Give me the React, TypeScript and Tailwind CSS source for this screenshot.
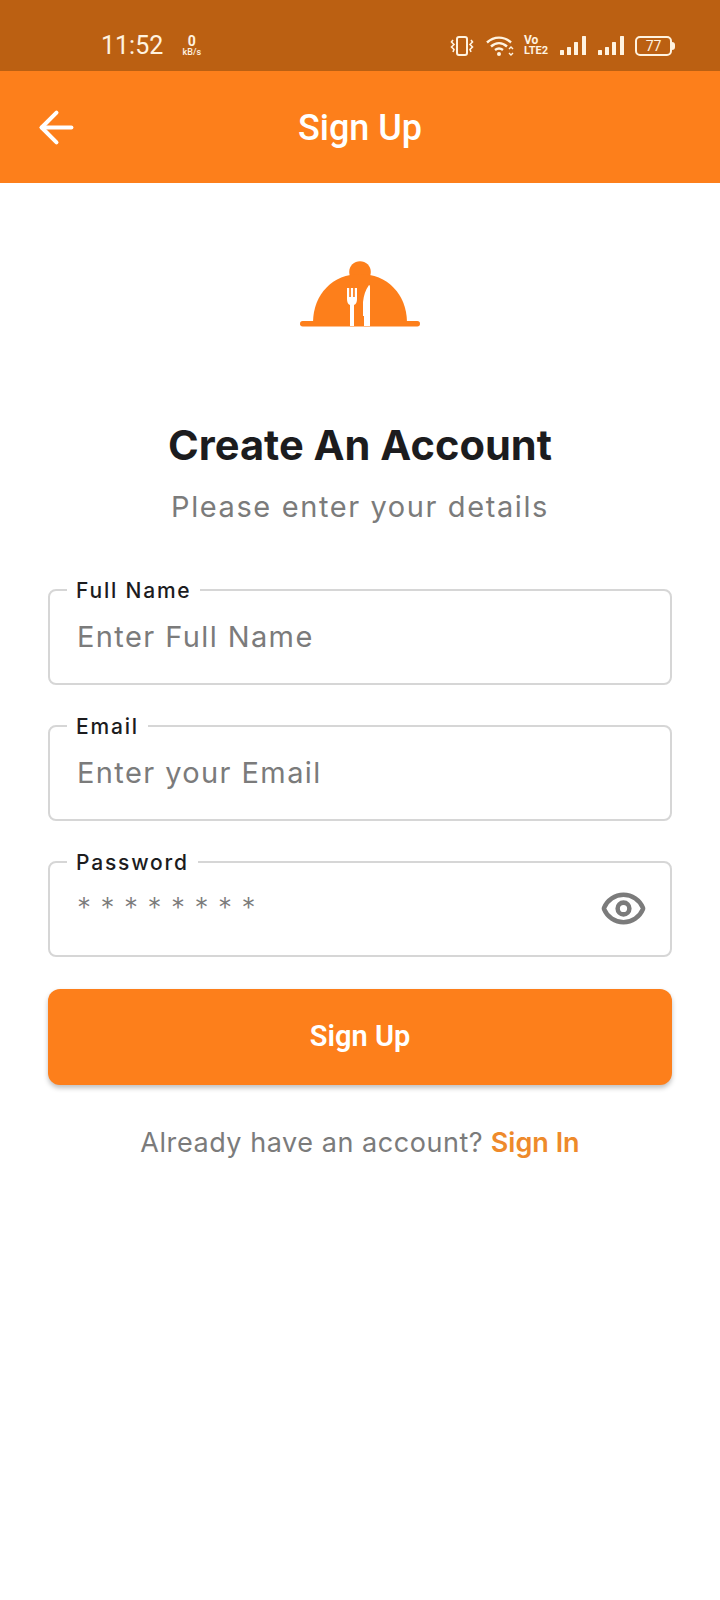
import { ArrowLeft, Eye } from 'lucide-react';

const poppinsLike = { fontFamily: 'Inter, "Noto Sans", sans-serif' };

function VibrateIcon() {
	return (
		<svg width="24" height="22" viewBox="0 0 24 22" fill="none" stroke="#fff3e0" strokeWidth="2">
			<rect x="7" y="2" width="10" height="18" rx="2" />
			<path d="M3 5 L1.5 7 L4 9.5 L1.5 12 L4 14.5 L3 17" strokeWidth="1.6" />
			<path d="M21 5 L22.5 7 L20 9.5 L22.5 12 L20 14.5 L21 17" strokeWidth="1.6" />
		</svg>
	);
}

function WifiIcon() {
	return (
		<svg width="28" height="22" viewBox="0 0 28 22" fill="none" stroke="#fff3e0" strokeWidth="2.4">
			<path d="M1 7.5 C8 1 18 1 25 7.5" />
			<path d="M5 11.5 C10 7 16 7 21 11.5" />
			<path d="M9 15 C11.5 13 14.5 13 17 15" />
			<circle cx="13" cy="19" r="2" fill="#fff3e0" stroke="none" />
			<path d="M23 14 L25 12 L27 14 M23 18 L25 20 L27 18" strokeWidth="1.4" />
		</svg>
	);
}

function SignalIcon() {
	return (
		<svg width="26" height="20" viewBox="0 0 26 20" fill="#fff3e0">
			<rect x="0" y="14" width="4" height="5" rx="0.5" />
			<rect x="7" y="11" width="4" height="8" rx="0.5" />
			<rect x="14" y="6" width="4" height="13" rx="0.5" />
			<rect x="22" y="0" width="4" height="19" rx="0.5" />
		</svg>
	);
}

function ClocheLogo() {
	return (
		<svg width="120" height="68" viewBox="0 0 120 68">
			<circle cx="60" cy="12" r="10.8" fill="#fd7f1b" />
			<path d="M13 63 C13 34 33 14 60 14 C87 14 107 34 107 63 Z" fill="#fd7f1b" />
			<rect x="0" y="61" width="120" height="5.5" rx="2.7" fill="#fd7f1b" />
			<path
				d="M47 28 h2.2 v9 h1.7 v-9 h2.2 v9 h1.7 v-9 h2.2 v11 q0 5 -3 6 v21 h-4 v-21 q-3 -1 -3 -6 Z"
				fill="#fff"
			/>
			<path d="M69 25 Q70 25 70 27 V66 H64 V56 H63 V42 Q64 32 69 25 Z" fill="#fff" />
		</svg>
	);
}

function OutlinedField(props: IOutlinedFieldProps) {
	return (
		<fieldset className="relative h-[106px] rounded-lg border-2 border-[#d6d6d6] px-[27px]">
			<legend
				className="ml-[-10px] h-[22px] px-[9px] text-[21px] leading-[24px] font-medium tracking-[1.8px] text-[#1c1c1e]"
				style={poppinsLike}
			>
				{props.label}
			</legend>
			<input
				type={props.children ? 'password' : 'text'}
				readOnly
				placeholder={props.placeholder}
				className={
					props.children
						? 'mt-[11px] h-[48px] w-full text-[28px] font-light tracking-[0.8px] text-[#7b7b7b] outline-none placeholder:text-[#7b7b7b]'
						: 'mt-[11px] h-[48px] w-full text-[29px] tracking-[1.4px] text-[#7b7b7b] outline-none placeholder:text-[#7b7b7b]'
				}
				style={poppinsLike}
			/>
			{props.children}
		</fieldset>
	);
}

export default function App() {
	return (
		<div className="min-h-[1600px] w-[720px] bg-white">
			<div className="flex h-[71px] items-center bg-[#bb6012] pl-[101px] pr-[45px] pt-[20px] text-[#fff3e0]">
				<span className="font-['Roboto'] text-[25px] leading-none">11:52</span>
				<div className="ml-[18px] flex w-[21px] flex-col items-center font-['Roboto'] leading-none">
					<span className="text-[14px] font-bold leading-[13px]">0</span>
					<span className="text-[9px] font-medium leading-[9px]">kB/s</span>
				</div>
				<div className="ml-auto flex items-center">
					<VibrateIcon />
					<div className="ml-[12px]">
						<WifiIcon />
					</div>
					<div className="ml-[10px] flex w-[26px] flex-col font-['Roboto'] font-bold leading-none">
						<span className="text-[12px] leading-[11px]">Vo</span>
						<span className="text-[11px] leading-[10px]">LTE2</span>
					</div>
					<div className="ml-[10px]">
						<SignalIcon />
					</div>
					<div className="ml-[12px]">
						<SignalIcon />
					</div>
					<div className="ml-[11px] flex h-[20px] w-[37px] items-center justify-center rounded-[5px] border-2 border-[#fff3e0] font-['Roboto'] text-[14px] leading-none">
						77
					</div>
					<div className="h-[8px] w-[3px] rounded-r-sm bg-[#fff3e0]" />
				</div>
			</div>

			<header className="relative flex h-[112px] items-center justify-center bg-[#fd7f1b] text-white">
				<ArrowLeft className="absolute left-[31px] h-[51px] w-[51px]" strokeWidth={1.9} />
				<h1 className="pt-[2px] font-['Roboto'] text-[36px] font-medium leading-none">Sign Up</h1>
			</header>

			<main className="flex flex-col items-center px-[48px] pt-[77px]">
				<ClocheLogo />
				<h2
					className="mt-[92px] text-[41.6px] leading-[50px] font-bold text-[#1c1c1e]"
					style={poppinsLike}
				>
					Create An Account
				</h2>
				<p
					className="mt-[20px] text-[29px] leading-[34px] tracking-[1.6px] text-[#7b7b7b]"
					style={poppinsLike}
				>
					Please enter your details
				</p>

				<form className="mt-[55px] flex w-full flex-col gap-[30px]">
					<OutlinedField label="Full Name" placeholder="Enter Full Name" />
					<OutlinedField label="Email" placeholder="Enter your Email" />
					<OutlinedField label="Password" placeholder="* * * * * * * *">
						<Eye
							className="absolute right-[23px] top-[12px] h-[47px] w-[47px] text-[#7b7b7b]"
							strokeWidth={2.3}
						/>
					</OutlinedField>
				</form>

				<button
					type="button"
					className="mt-[32px] h-[96px] w-full rounded-xl bg-[#fd7f1b] font-['Roboto'] text-[29px] font-semibold text-white shadow-[0_3px_5px_rgba(0,0,0,0.25)]"
				>
					Sign Up
				</button>

				<p className="mt-[41px] text-[27px] leading-[34px] text-[#7b7b7b]" style={poppinsLike}>
					<span className="tracking-[0.55px]">Already have an account?</span>{' '}
					<span className="font-semibold text-[#ee8a2b]">Sign In</span>
				</p>
			</main>
		</div>
	);
}

interface IOutlinedFieldProps {
	label: string;
	placeholder: string;
	children?: React.ReactNode;
}
